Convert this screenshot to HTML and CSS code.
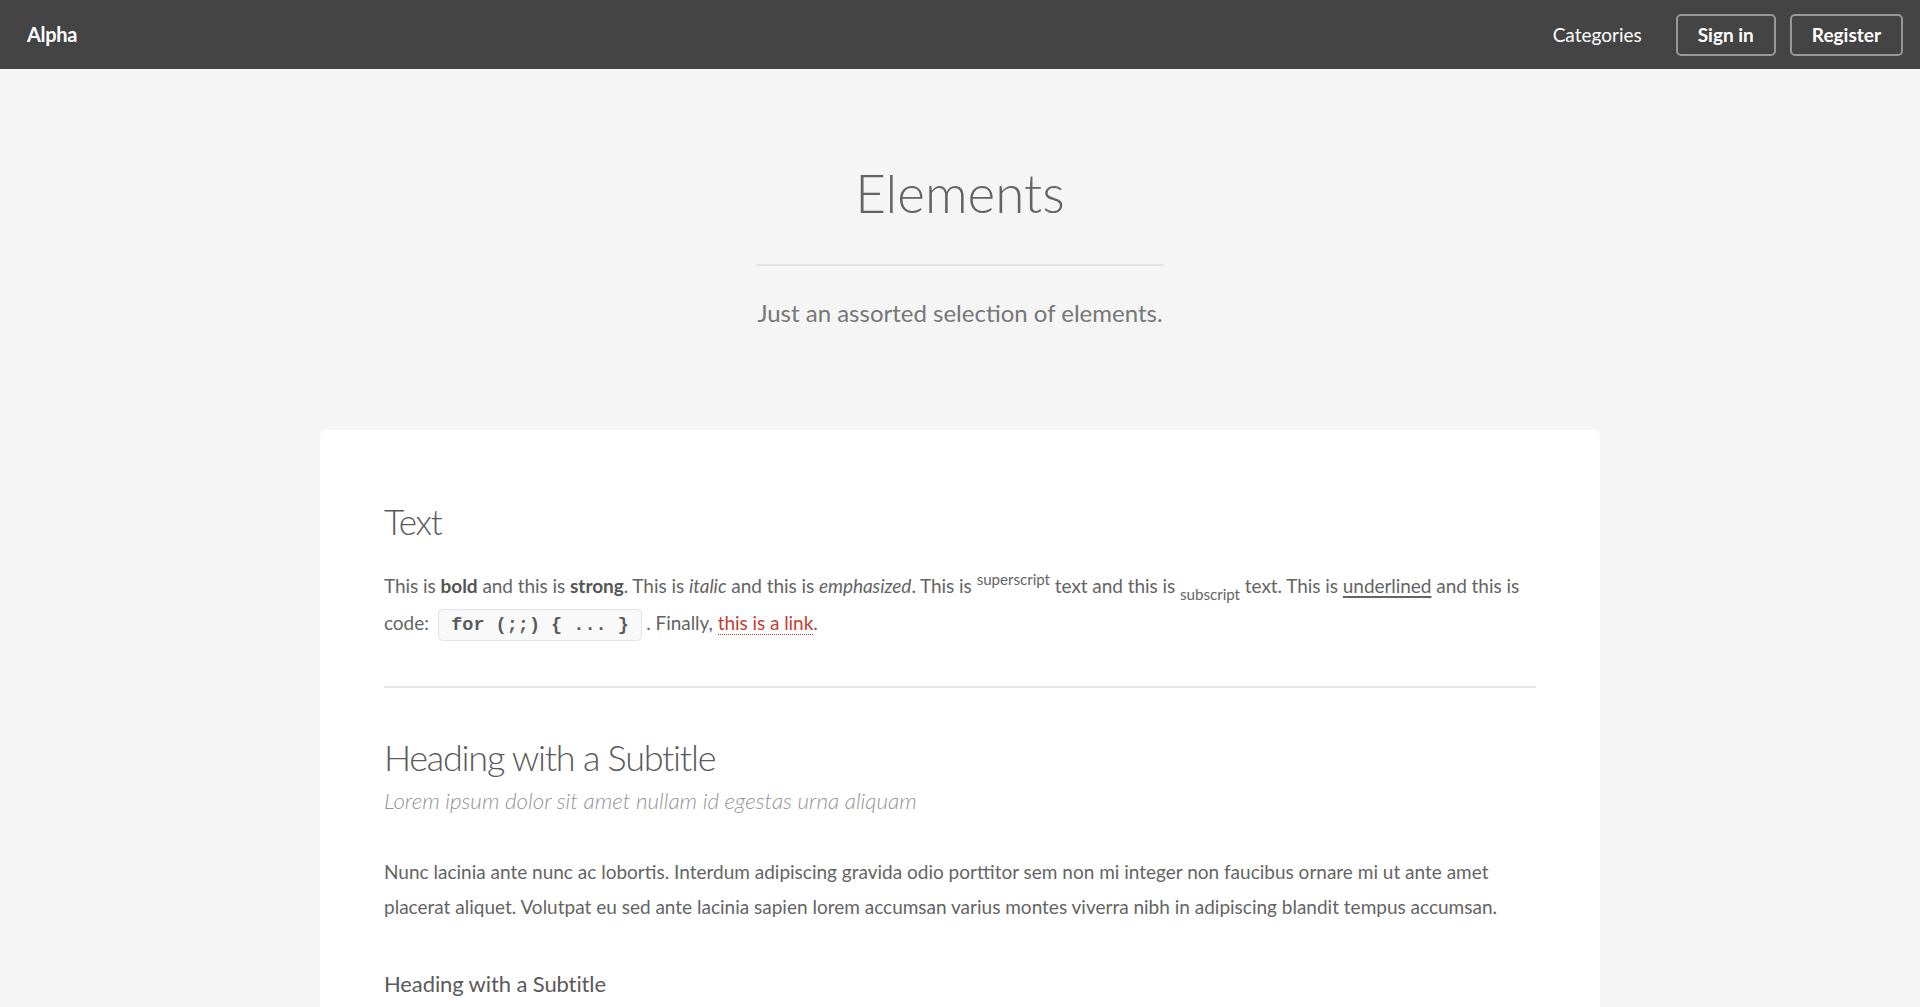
FILE: index.html
```html
<!DOCTYPE html>
<html lang="en">
<head>
<meta charset="utf-8">
<title>Elements - Alpha</title>
<link rel="stylesheet" href="styles.css">
</head>
<body>
<header class="topbar">
  <a class="brand" href="#">Alpha</a>
  <nav>
    <ul class="nav">
      <li><a class="nav-link" href="#">Categories</a></li>
      <li><a class="btn" href="#">Sign in</a></li>
      <li><a class="btn" href="#">Register</a></li>
    </ul>
  </nav>
</header>

<main>
  <header class="intro">
    <h1 class="intro-title">Elements</h1>
    <p class="intro-sub">Just an assorted selection of elements.</p>
  </header>

  <section class="card">
    <h2 class="sec-title">Text</h2>
    <p class="text-demo">This is <b>bold</b> and this is <strong>strong</strong>. This is <i>italic</i> and this is <em>emphasized</em>. This is <sup>superscript</sup> text and this is <sub>subscript</sub> text. This is <u>underlined</u> and this is code: <code>for (;;) { ... }</code>. Finally, <a class="link" href="#">this is a link</a>.</p>

    <hr class="rule">

    <header class="sub-head">
      <h2 class="sec-title2">Heading with a Subtitle</h2>
      <p class="tagline">Lorem ipsum dolor sit amet nullam id egestas urna aliquam</p>
    </header>
    <p class="body-p">Nunc lacinia ante nunc ac lobortis. Interdum adipiscing gravida odio porttitor sem non mi integer non faucibus ornare mi ut ante amet placerat aliquet. Volutpat eu sed ante lacinia sapien lorem accumsan varius montes viverra nibh in adipiscing blandit tempus accumsan.</p>

    <header class="sub-head">
      <h4 class="sec-title4">Heading with a Subtitle</h4>
      <p class="tagline-sm">Lorem ipsum dolor sit amet nullam id egestas urna aliquam</p>
    </header>
    <p class="body-p">Nunc lacinia ante nunc ac lobortis. Interdum adipiscing gravida odio porttitor sem non mi integer non faucibus ornare mi ut ante amet placerat aliquet. Volutpat eu sed ante lacinia sapien lorem accumsan varius montes viverra nibh in adipiscing blandit tempus accumsan.</p>
  </section>
</main>
</body>
</html>
```

FILE: styles.css
```css
* { box-sizing: border-box; }

html, body { margin: 0; padding: 0; }

body {
  background: #f5f5f5;
  color: #646464;
  font-family: Lato, "Open Sans", sans-serif;
  font-size: 19px;
  line-height: 35px;
}

/* top bar */
.topbar {
  height: 69px;
  background: #444;
  display: flex;
  align-items: center;
  justify-content: space-between;
  padding: 0 17px 0 27px;
}

.brand {
  color: #fff;
  font-weight: 700;
  font-size: 20px;
  text-decoration: none;
  letter-spacing: -0.3px;
}

.nav {
  display: flex;
  align-items: center;
  gap: 14px;
  list-style: none;
  margin: 0;
  padding: 0;
}

.nav-link {
  color: #fff;
  font-size: 19px;
  text-decoration: none;
  margin-right: 20px;
}

.btn {
  display: inline-flex;
  align-items: center;
  justify-content: center;
  height: 42px;
  padding: 0 20px;
  border: 2px solid rgba(255, 255, 255, 0.45);
  border-radius: 5px;
  color: #fff;
  font-size: 19px;
  font-weight: 700;
  text-decoration: none;
}

/* intro */
.intro {
  display: flex;
  flex-direction: column;
  align-items: center;
  padding: 92px 0 100px;
}

.intro-title {
  margin: 0;
  font-size: 53px;
  font-weight: 300;
  line-height: 1.2;
  color: #646464;
}

.intro-sub {
  margin: 39px 0 0;
  padding: 30px 0 0;
  border-top: 2px solid #e3e3e3;
  font-size: 24px;
  line-height: 34.5px;
  color: #777;
}

/* card */
.card {
  width: 1280px;
  margin: 0 auto 40px;
  background: #fff;
  border-radius: 6px;
  padding: 65px 64px 64px;
}

.sec-title {
  margin: 0 0 20px;
  font-size: 35px;
  font-weight: 300;
  line-height: 52.5px;
  letter-spacing: -0.035em;
  color: #5a5a5a;
}

.text-demo {
  margin: 0;
  line-height: 36px;
  letter-spacing: -0.05px;
}

.text-demo b,
.text-demo strong {
  font-weight: 700;
  color: #555;
}

.text-demo sup,
.text-demo sub {
  font-size: 0.8em;
  position: relative;
  vertical-align: baseline;
}

.text-demo sup { top: -0.5em; }
.text-demo sub { top: 0.5em; }

.text-demo u {
  text-decoration-thickness: 2px;
  text-underline-offset: 3px;
}

.text-demo code {
  font-family: "Liberation Mono", "Courier New", monospace;
  font-size: 18.5px;
  font-weight: 700;
  letter-spacing: 0;
  color: #5a5a5a;
  background: #f9f9f9;
  border: 1px solid #e3e3e3;
  border-radius: 5px;
  padding: 4.5px 12.5px;
  margin: 0 4px 0 4px;
}

.link {
  color: #c43c34;
  text-decoration: none;
  border-bottom: 1px dotted #c43c34;
}

.rule {
  border: 0;
  border-bottom: 2px solid #e5e5e5;
  margin: 42.5px 0 42px;
  height: 0;
}

.sub-head { margin: 0; }

.sec-title2 {
  margin: 0;
  font-size: 36px;
  font-weight: 300;
  line-height: 54px;
  letter-spacing: -0.035em;
  color: #5a5a5a;
}

.tagline {
  margin: 0;
  font-size: 22.4px;
  font-weight: 300;
  font-style: italic;
  line-height: 33px;
  color: #949494;
}

.body-p {
  margin: 37px 0 0;
}

.sec-title4 {
  margin: 43px 0 0;
  font-size: 22px;
  font-weight: 400;
  line-height: 33px;
  letter-spacing: -0.005em;
  color: #5a5a5a;
}

.tagline-sm {
  margin: 8px 0 0;
  font-size: 19px;
  font-style: italic;
  font-weight: 300;
  line-height: 30px;
  color: #949494;
}
```
